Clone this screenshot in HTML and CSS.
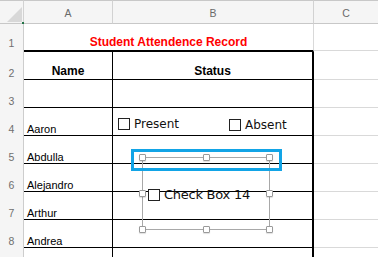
FILE: index.html
```html
<!DOCTYPE html>
<html lang="en">
<head>
    <meta charset="UTF-8">
    <meta name="viewport" content="width=device-width, initial-scale=1.0">
    <title>Student Attendence Record</title>
    <link rel="stylesheet" href="styles.css">
</head>
<body>
    <div class="sheet">
        <div class="corner"><span class="corner__triangle"></span></div>
        <div class="col-head">A</div>
        <div class="col-head">B</div>
        <div class="col-head col-head--last">C</div>

        <div class="row-head row-head--first">1</div>
        <div class="cell title">Student Attendence Record</div>
        <div class="cell cell--c cell--top"></div>

        <div class="row-head">2</div>
        <div class="cell cell--a heading">Name</div>
        <div class="cell cell--b heading">Status</div>
        <div class="cell cell--c"></div>

        <div class="row-head">3</div>
        <div class="cell cell--a"></div>
        <div class="cell cell--b"></div>
        <div class="cell cell--c"></div>

        <div class="row-head">4</div>
        <div class="cell cell--a">Aaron</div>
        <div class="cell cell--b"></div>
        <div class="cell cell--c"></div>

        <div class="row-head">5</div>
        <div class="cell cell--a">Abdulla</div>
        <div class="cell cell--b"></div>
        <div class="cell cell--c"></div>

        <div class="row-head">6</div>
        <div class="cell cell--a">Alejandro</div>
        <div class="cell cell--b"></div>
        <div class="cell cell--c"></div>

        <div class="row-head">7</div>
        <div class="cell cell--a">Arthur</div>
        <div class="cell cell--b"></div>
        <div class="cell cell--c"></div>

        <div class="row-head">8</div>
        <div class="cell cell--a">Andrea</div>
        <div class="cell cell--b"></div>
        <div class="cell cell--c"></div>

        <div class="row-head"></div>
        <div class="cell cell--a cell--open"></div>
        <div class="cell cell--b cell--open"></div>
        <div class="cell cell--c cell--open"></div>

        <!-- form controls floating over the sheet -->
        <label class="form-check form-check--present">
            <span class="form-check__box"></span>
            <span class="form-check__label">Present</span>
        </label>
        <label class="form-check form-check--absent">
            <span class="form-check__box"></span>
            <span class="form-check__label">Absent</span>
        </label>

        <div class="ctl-frame">
            <span class="handle handle--tl"></span>
            <span class="handle handle--tm"></span>
            <span class="handle handle--tr"></span>
            <span class="handle handle--ml"></span>
            <span class="handle handle--mr"></span>
            <span class="handle handle--bl"></span>
            <span class="handle handle--bm"></span>
            <span class="handle handle--br"></span>
        </div>
        <div class="selection"></div>

        <label class="form-check form-check--new">
            <span class="form-check__box"></span>
            <span class="form-check__label">Check Box 14</span>
        </label>
    </div>
</body>
</html>
```

FILE: styles.css
```css
* { box-sizing: border-box; }
html, body { margin: 0; height: 100%; overflow: hidden; background: #fff; }

.sheet { position: relative; display: grid; grid-template-columns: 24px 89px 201px 64px; grid-template-rows: 24px repeat(8, 28px) 9px; font-family: "Liberation Sans", Arial, sans-serif; }

/* headers */
.corner { position: relative; display: flex; align-items: flex-end; justify-content: flex-end; background: #f5f5f5; border-top: 1px solid #c8c8c8; border-bottom: 1px solid #c8c8c8; border-right: 1px solid #d2d2d2; }
.corner__triangle { width: 0; height: 0; margin: 0 1px 1px 0; border-left: 15px solid transparent; border-bottom: 15px solid #d8d8d8; }
.corner::after { content: ""; position: absolute; right: -1px; bottom: -1px; width: 2px; height: 2px; background: #217346; }
.col-head { display: flex; justify-content: center; align-items: center; padding-top: 2px; background: #f5f5f5; border-top: 1px solid #c8c8c8; border-bottom: 1px solid #c8c8c8; border-right: 1px solid #d2d2d2; color: #6a6a6a; font-size: 10.5px; line-height: 12px; }
.col-head--last { border-right: 0; }
.row-head { display: flex; justify-content: center; align-items: flex-end; padding-bottom: 1px; background: #f5f5f5; border-right: 1px solid #cdcdcd; color: #6f6f6f; font-size: 10.5px; line-height: 12px; }
.row-head--first { padding-bottom: 3px; }

/* cells */
.cell { display: flex; align-items: flex-end; font-size: 11px; line-height: 12px; color: #000; }
.cell--a { padding-left: 3px; border-right: 1px solid #000; border-bottom: 1px solid #000; }
.cell--b { border-right: 2px solid #000; border-bottom: 1px solid #000; }
.cell--c { border-bottom: 1px solid #d9d9d9; }
.cell--top { margin-bottom: 1px; }
.cell--open { border-bottom: 0; }
.title { grid-column: span 2; justify-content: center; border-bottom: 2px solid #000; border-right: 1px solid #d9d9d9; color: #f00; font-weight: bold; font-size: 12px; line-height: 15px; }
.heading { justify-content: center; padding-left: 0; font-weight: bold; font-size: 12px; line-height: 15px; }

/* form controls */
.form-check { position: absolute; display: flex; align-items: center; gap: 4px; font-family: "DejaVu Sans", sans-serif; font-size: 12px; line-height: 14px; color: #111; white-space: nowrap; }
.form-check__box { width: 12px; height: 12px; background: #fff; border: 1px solid #222; }
.form-check--present { left: 118px; top: 117px; }
.form-check--absent { left: 229px; top: 118px; }
.form-check--new { left: 148px; top: 187px; font-size: 13px; line-height: 15px; letter-spacing: -0.25px; }

.ctl-frame { position: absolute; left: 142px; top: 157px; width: 128px; height: 73px; border: 1px solid #a8a8a8; }
.handle { position: absolute; width: 7px; height: 7px; background: #fff; border: 1px solid #9a9a9a; border-radius: 1px; box-shadow: 0 1px 1px rgba(0, 0, 0, 0.12); }
.handle--tl { left: -4px; top: -4px; }
.handle--tm { left: calc(50% - 3.5px); top: -4px; }
.handle--tr { right: -4px; top: -4px; }
.handle--ml { left: -4px; top: calc(50% - 3.5px); }
.handle--mr { right: -4px; top: calc(50% - 3.5px); }
.handle--bl { left: -4px; bottom: -4px; }
.handle--bm { left: calc(50% - 3.5px); bottom: -4px; }
.handle--br { right: -4px; bottom: -4px; }

.selection { position: absolute; left: 131px; top: 149px; width: 151px; height: 22px; border: 3px solid #12a4e6; }
```
